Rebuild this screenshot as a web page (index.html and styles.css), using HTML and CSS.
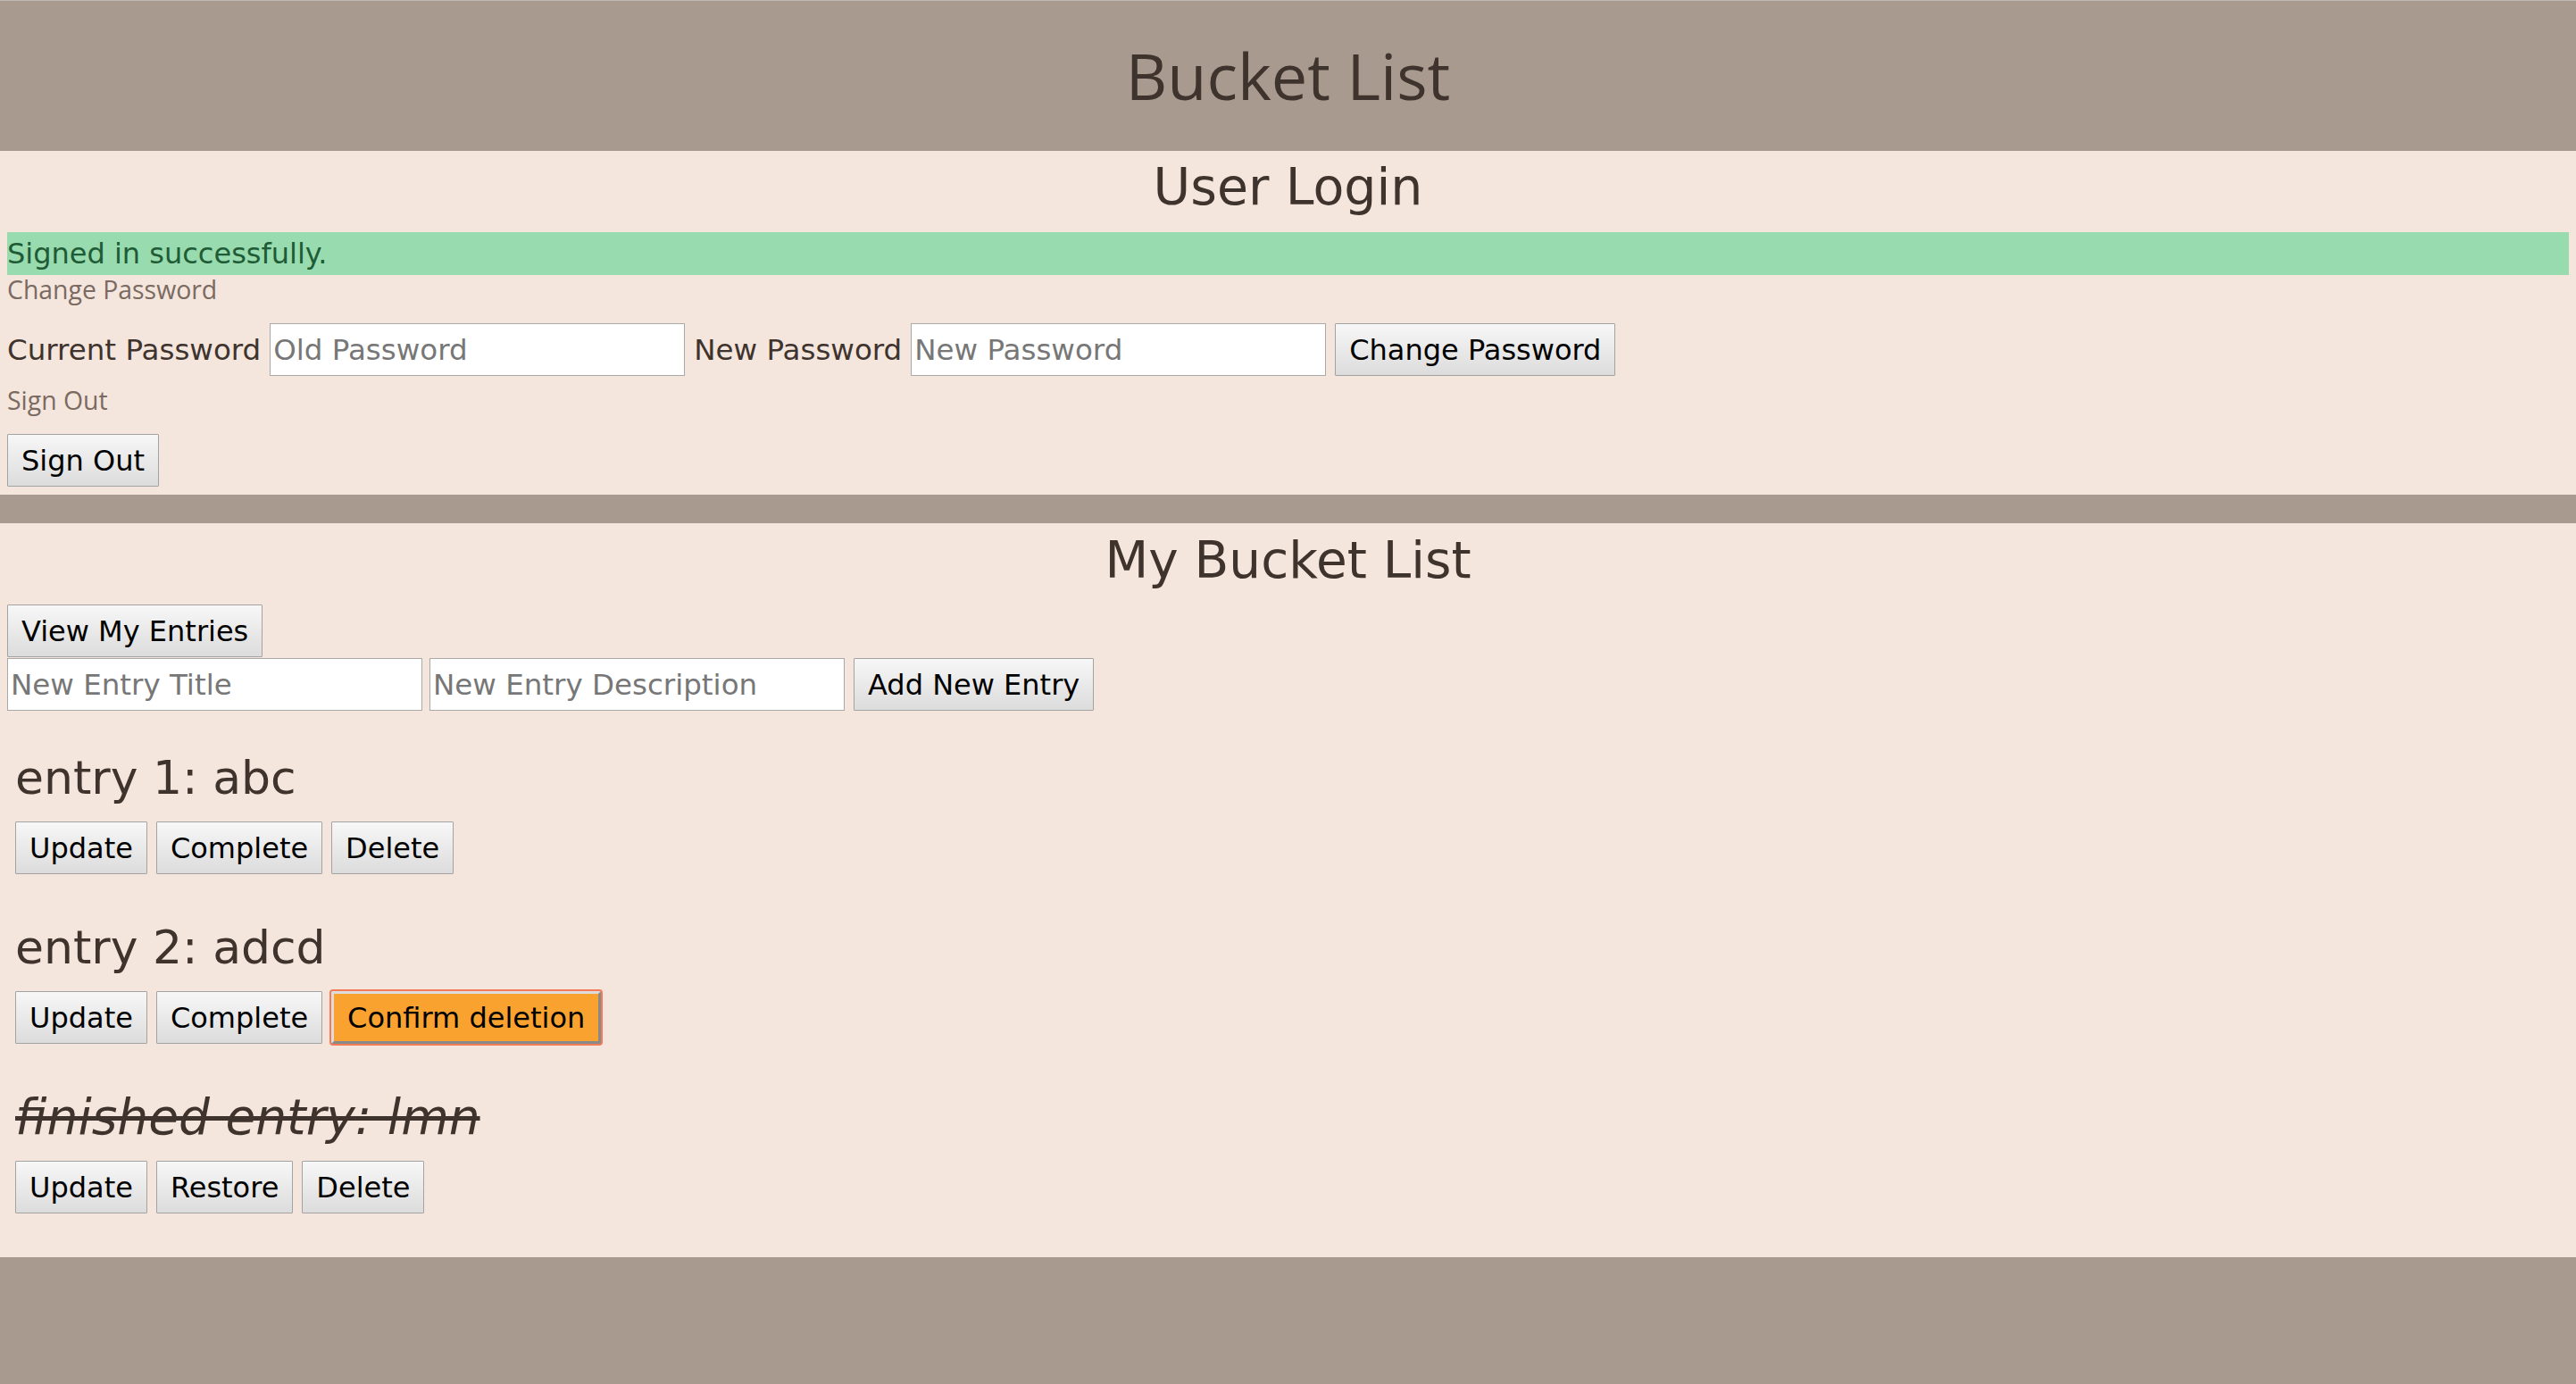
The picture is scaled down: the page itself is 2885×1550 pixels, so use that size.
FILE: index.html
```html
<!DOCTYPE html>
<html lang="en">
<head>
    <meta charset="UTF-8">
    <meta name="viewport" content="width=device-width, initial-scale=1.0">
    <title>Bucket List</title>

    <link rel="stylesheet" href="styles.css">
</head>
<body>

<header class="site-header">
    <h1>Bucket List</h1>
</header>

<section class="panel login">
    <h2>User Login</h2>

    <div class="flash">Signed in successfully.</div>

    <h4 class="form-title">Change Password</h4>
    <form class="inline-form" id="changePasswordForm">
        <label for="oldPassword">Current Password</label>
        <input type="password" id="oldPassword" placeholder="Old Password">
        <label for="newPassword">New Password</label>
        <input type="password" id="newPassword" placeholder="New Password">
        <button type="submit" class="btn">Change Password</button>
    </form>

    <h4 class="form-title signout-title">Sign Out</h4>
    <button class="btn signout">Sign Out</button>
</section>

<section class="panel bucket">
    <h2>My Bucket List</h2>

    <button class="btn view-entries">View My Entries</button>
    <form class="inline-form new-entry" id="newEntryForm">
        <input type="text" id="entryTitle" placeholder="New Entry Title">
        <input type="text" id="entryDescription" placeholder="New Entry Description">
        <button type="submit" class="btn">Add New Entry</button>
    </form>

    <div class="entries">
        <div class="entry">
            <h3>entry 1: abc</h3>
            <div class="actions">
                <button class="btn">Update</button>
                <button class="btn">Complete</button>
                <button class="btn">Delete</button>
            </div>
        </div>

        <div class="entry">
            <h3>entry 2: adcd</h3>
            <div class="actions">
                <button class="btn">Update</button>
                <button class="btn">Complete</button>
                <button class="btn confirm">Confirm deletion</button>
            </div>
        </div>

        <div class="entry finished">
            <h3>finished entry: lmn</h3>
            <div class="actions">
                <button class="btn">Update</button>
                <button class="btn">Restore</button>
                <button class="btn">Delete</button>
            </div>
        </div>
    </div>
</section>

</body>
</html>
```

FILE: styles.css
```css
body {
    margin: 0;
    background-color: #a89a8e;
    color: #3f332d;
    font-family: "DejaVu Sans", sans-serif;
}

/* barra de arriba */
.site-header {
    height: 168px;
    border-top: 1px solid #bfbab6;
    text-align: center;
}

.site-header h1 {
    margin: 0;
    font-family: "Open Sans", sans-serif;
    font-weight: normal;
    font-size: 72px;
    line-height: 166px;
}

.panel {
    background-color: #f4e6dd;
    padding: 0 8px;
}

.panel h2 {
    margin: 0;
    text-align: center;
    font-weight: normal;
}

.login {
    padding-bottom: 9px;
}

.login h2 {
    font-size: 57px;
    line-height: 81px;
}

.flash {
    margin-top: 10px;
    height: 48px;
    line-height: 48px;
    background-color: #98dbae;
    color: #1e5b36;
    font-size: 32px;
}

.form-title {
    margin: 0;
    font-family: "Open Sans", sans-serif;
    font-weight: normal;
    font-size: 28.4px;
    line-height: 32px;
    color: #7a6a62;
}

.signout-title {
    margin-top: 11px;
}

.inline-form {
    display: flex;
    align-items: center;
    gap: 10px;
    height: 59px;
    margin-top: 22px;
    font-size: 32.5px;
}

.inline-form label {
    color: #3f332d;
}

.inline-form input {
    box-sizing: border-box;
    width: 465px;
    height: 59px;
    margin: 0;
    padding: 0 3px;
    border: 1px solid #a9a9a9;
    background-color: #ffffff;
    font-family: "DejaVu Sans", sans-serif;
    font-size: 32.5px;
    color: #222222;
}

.inline-form input::placeholder {
    color: #777777;
}

.btn {
    box-sizing: border-box;
    height: 59px;
    margin: 0;
    padding: 0 15px;
    border: 1px solid #a3a3a3;
    border-radius: 1px;
    background: linear-gradient(#f7f7f7, #dcdcdc);
    font-family: "DejaVu Sans", sans-serif;
    font-size: 32px;
    color: #000000;
    cursor: pointer;
}

.signout {
    display: block;
    margin-top: 22px;
}

/* franja gris entre las dos secciones */
.bucket {
    margin-top: 32px;
    padding-bottom: 49px;
}

.bucket h2 {
    font-size: 56.5px;
    line-height: 84px;
}

.view-entries {
    display: block;
    margin-top: 7px;
}

.new-entry {
    margin-top: 1px;
    gap: 8px;
}

.new-entry .btn {
    margin-left: 2px;
}

.entry {
    padding: 0 9px;
    margin-top: 51px;
}

.entry:first-child {
    margin-top: 44px;
}

.entry h3 {
    margin: 0 0 18px 0;
    font-weight: normal;
    font-size: 52px;
    line-height: 62px;
}

.entry.finished h3 {
    font-style: italic;
    font-size: 55px;
    text-decoration: line-through;
}

.actions {
    display: flex;
    gap: 10px;
}

/* boton de confirmar borrado */
.btn.confirm {
    border: 3px solid;
    border-color: #dcdcdc #8a8a8a #8a8a8a #dcdcdc;
    background: #f9a230;
    box-shadow: 0 0 0 2px #f47a58;
    border-radius: 2px;
}
```
